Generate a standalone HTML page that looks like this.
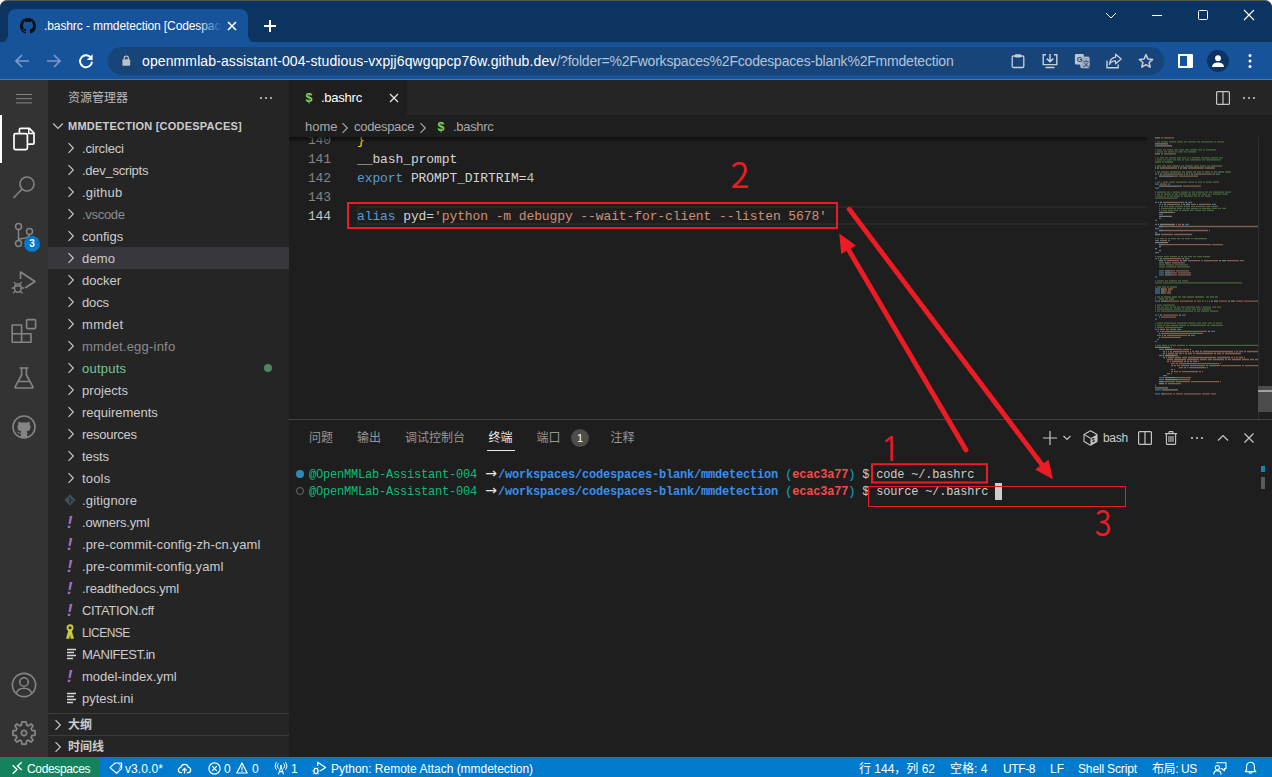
<!DOCTYPE html>
<html lang="zh-CN">
<head>
<meta charset="utf-8">
<title>.bashrc - mmdetection [Codespaces]</title>
<style>
*{box-sizing:border-box;margin:0;padding:0}
html,body{width:1272px;height:777px;overflow:hidden;background:#fff}
body{position:relative;font-family:"Liberation Sans","Noto Sans CJK SC",sans-serif;font-size:13px;color:#ccc;-webkit-font-smoothing:antialiased}
.abs{position:absolute}
svg{display:block;overflow:visible}
/* ---------- chrome ---------- */
#chrome{position:absolute;left:0;top:0;width:1272px;height:80px;background:#0c3460;border-radius:7px 7px 0 0;border-top:1px solid #5a534b;overflow:hidden}
#ctab{position:absolute;left:8px;top:8px;width:240px;height:34px;background:#16539b;border-radius:8px 8px 0 0}
#ctab .ttl{position:absolute;left:36px;top:10px;width:178px;white-space:nowrap;overflow:hidden;font-size:12px;color:#fff;letter-spacing:-0.1px}
#ctoolbar{position:absolute;left:0;top:41px;width:1272px;height:38px;background:#16539b;border-bottom:1px solid #4878b4}
#omni{position:absolute;left:108px;top:5px;width:1056px;height:28px;border-radius:14px;background:#174479}
#omni .url{position:absolute;left:34px;top:6px;font-size:14px;color:#fff;white-space:nowrap;letter-spacing:0.11px}
#omni .url span{color:#b3c5dc;letter-spacing:-0.2px}
/* ---------- vscode ---------- */
#act{position:absolute;left:0;top:80px;width:48px;height:677px;background:#333333}
#side{position:absolute;left:48px;top:80px;width:241px;height:677px;background:#252526}
#edit{position:absolute;left:289px;top:80px;width:983px;height:339px;background:#1e1e1e}
#panel{position:absolute;left:289px;top:419px;width:983px;height:338px;background:#1e1e1e;border-top:1px solid #424242}
#status{position:absolute;left:0;top:757px;width:1272px;height:22px;background:#007acc;color:#fff;font-size:12px}
#tree{position:absolute;left:0;top:0;width:241px;height:633px;overflow:hidden}
.row{position:absolute;left:0;width:241px;height:22px;line-height:22px;white-space:nowrap;color:#cccccc}
.row.sel{background:#37373d}
.row.dim{color:#8c8c8c}
.row.grn{color:#73c991}
.row .ic{position:absolute;left:18px;top:5px}
.row .yml{top:0;left:19px;color:#a074c4;font-weight:bold;font-style:italic;font-size:16.5px}
.row .lb{position:absolute;left:34px;top:1px;font-size:13px}
.row .dot{position:absolute;left:216px;top:7px;width:8px;height:8px;border-radius:4px;background:#4f8462}
.pane{position:absolute;left:0;width:241px;height:22px;border-top:1px solid #3c3c3c;line-height:21px}
.pane span{position:absolute;left:20px;top:1px;font-size:12px;font-weight:bold;color:#cccccc}
#code{position:absolute;left:0;top:57px;width:983px;height:282px;overflow:hidden;font-family:"Liberation Mono","DejaVu Sans Mono",monospace;font-size:13px;letter-spacing:-0.1px;color:#d4d4d4}
.ln{position:absolute;left:0;width:983px;height:19px;line-height:19px;white-space:pre}
.ln .no{position:absolute;left:0;top:1px;width:42px;text-align:right;color:#858585}
.ln .no.cur{color:#c6c6c6}
.ln .tx{position:absolute;left:68px;top:1px}
.ln b{font-weight:normal}
.ln .k{color:#569cd6}.ln .s{color:#ce9178}.ln .n{color:#b5cea8}
#ptabs{position:absolute;left:0;top:0;width:700px;height:35px}
.ptab{position:absolute;top:9px;font-size:12px;line-height:18px;color:#969696;white-space:nowrap}
.ptab.on{color:#e7e7e7}
#term{position:absolute;left:0;top:0;width:983px;height:337px;font-family:"Liberation Mono","DejaVu Sans Mono",monospace;font-size:12px;letter-spacing:-0.2px;color:#cccccc}
.tl{position:absolute;left:20px;height:17px;line-height:17px;white-space:pre}
.tl b{font-weight:normal}
.tl .g{color:#0dbc79}.tl .bl{color:#3b8eea;font-weight:bold}.tl .cy{color:#11a8cd}.tl .rd{color:#f14c4c;font-weight:bold}
.tl .ar{display:inline-block;width:14px;color:#e5e5e5;font-family:"DejaVu Sans","Liberation Sans",sans-serif;letter-spacing:0;font-size:14px;line-height:14px;text-align:center}
.st{position:absolute;top:3px;font-size:12px;line-height:18px;white-space:nowrap;color:#fff}
</style>
</head>
<body>
<div id="chrome">
  <div id="ctab">
    <svg class="abs" style="left:-8px;bottom:0" width="8" height="8"><path d="M0 8 A8 8 0 0 0 8 0 V8 Z" fill="#16539b"/></svg>
    <svg class="abs" style="right:-8px;bottom:0" width="8" height="8"><path d="M8 8 A8 8 0 0 1 0 0 V8 Z" fill="#16539b"/></svg>
    <svg class="abs" style="left:12px;top:9px" width="16" height="16" viewBox="0 0 16 16"><path fill="#0b0f14" d="M8 0C3.58 0 0 3.58 0 8c0 3.54 2.29 6.53 5.47 7.59.4.07.55-.17.55-.38 0-.19-.01-.82-.01-1.49-2.01.37-2.53-.49-2.69-.94-.09-.23-.48-.94-.82-1.13-.28-.15-.68-.52-.01-.53.63-.01 1.08.58 1.23.82.72 1.21 1.87.87 2.33.66.07-.52.28-.87.51-1.07-1.78-.2-3.64-.89-3.64-3.95 0-.87.31-1.59.82-2.15-.08-.2-.36-1.02.08-2.12 0 0 .67-.21 2.2.82.64-.18 1.32-.27 2-.27s1.36.09 2 .27c1.53-1.04 2.2-.82 2.2-.82.44 1.1.16 1.92.08 2.12.51.56.82 1.27.82 2.15 0 3.07-1.87 3.75-3.65 3.95.29.25.54.73.54 1.48 0 1.07-.01 1.93-.01 2.2 0 .21.15.46.55.38A8.01 8.01 0 0 0 16 8c0-4.42-3.58-8-8-8z"/></svg>
    <div class="ttl">.bashrc - mmdetection [Codespaces]</div>
    <div class="abs" style="left:190px;top:8px;width:24px;height:22px;background:linear-gradient(90deg,rgba(22,83,155,0),#16539b)"></div>
    <svg class="abs" style="left:219px;top:12px" width="10" height="10" viewBox="0 0 10 10"><path d="M1 1 L9 9 M9 1 L1 9" stroke="#fff" stroke-width="1.6" fill="none"/></svg>
  </div>
  <svg class="abs" style="left:263px;top:18px" width="14" height="14" viewBox="0 0 14 14"><path d="M7 1 V13 M1 7 H13" stroke="#fff" stroke-width="2" fill="none"/></svg>
  <!-- window controls -->
  <svg class="abs" style="left:1104px;top:10px" width="14" height="10" viewBox="0 0 14 10"><path d="M2 2 L7 7 L12 2" stroke="#fff" stroke-width="1" fill="none"/></svg>
  <div class="abs" style="left:1152px;top:14px;width:10px;height:1px;background:#fff"></div>
  <div class="abs" style="left:1198px;top:9px;width:10px;height:10px;border:1px solid #fff;border-radius:1.5px"></div>
  <svg class="abs" style="left:1243px;top:8px" width="12" height="12" viewBox="0 0 12 12"><path d="M1 1 L11 11 M11 1 L1 11" stroke="#fff" stroke-width="1.1" fill="none"/></svg>
  <div id="ctoolbar">
    <svg class="abs" style="left:14px;top:11px" width="16" height="16" viewBox="0 0 16 16"><path d="M15 8 H2.5 M8 2 L2 8 L8 14" stroke="#7b9bc6" stroke-width="1.7" fill="none"/></svg>
    <svg class="abs" style="left:46px;top:11px" width="16" height="16" viewBox="0 0 16 16"><path d="M1 8 H13.5 M8 2 L14 8 L8 14" stroke="#7b9bc6" stroke-width="1.7" fill="none"/></svg>
    <svg class="abs" style="left:78px;top:11px" width="16" height="16" viewBox="0 0 16 16"><path d="M13.2 5.2 A6 6 0 1 0 14 8.6" stroke="#fff" stroke-width="1.9" fill="none"/><path d="M14.6 1.2 V7 H8.8 Z" fill="#fff"/></svg>
    <div id="omni">
      <svg class="abs" style="left:14px;top:8px" width="8.6" height="11.2" viewBox="0 0 10 13"><rect x="0.5" y="5" width="9" height="7.5" rx="1" fill="#bcc1c8"/><path d="M2.6 5.5 V3.6 A2.4 2.4 0 0 1 7.4 3.6 V5.5" stroke="#bcc1c8" stroke-width="1.5" fill="none"/></svg>
      <div class="url">openmmlab-assistant-004-studious-vxpjj6qwgqpcp76w.github.dev<span>/?folder=%2Fworkspaces%2Fcodespaces-blank%2Fmmdetection</span></div>
      <!-- clipboard -->
      <svg class="abs" style="left:902px;top:6px" width="16" height="16" viewBox="0 0 16 16"><rect x="2.2" y="3" width="11.6" height="11.5" rx="1.2" stroke="#c9d0da" stroke-width="1.3" fill="none"/><rect x="5" y="1.2" width="6" height="3.4" rx="0.8" fill="#c9d0da"/></svg>
      <!-- install -->
      <svg class="abs" style="left:933px;top:6px" width="18" height="16" viewBox="0 0 18 16"><path d="M5 1.8 H2.2 V11.6 H15.8 V1.8 H13" stroke="#c9d0da" stroke-width="1.4" fill="none"/><path d="M9 1 V8.4 M5.8 5.6 L9 8.8 L12.2 5.6" stroke="#c9d0da" stroke-width="1.5" fill="none"/><path d="M4.5 14.4 H13.5" stroke="#c9d0da" stroke-width="1.5"/></svg>
      <!-- translate -->
      <svg class="abs" style="left:966px;top:6px" width="16" height="16" viewBox="0 0 18 18"><rect x="1" y="1" width="10" height="12" rx="1.2" fill="#bcc4cf"/><rect x="7.6" y="4.6" width="9.4" height="12" rx="1.2" fill="#9fabba" stroke="#bcc4cf" stroke-width="1"/><text x="3" y="10.5" font-size="8" font-weight="bold" fill="#174479" font-family="Liberation Sans, sans-serif">G</text><text x="9.6" y="14.6" font-size="8" fill="#174479" font-family="Noto Sans CJK SC, sans-serif">文</text></svg>
      <!-- share -->
      <svg class="abs" style="left:997px;top:5px" width="18" height="18" viewBox="0 0 18 18"><path d="M2 8.5 V15.8 H13.2 V12.6" stroke="#c9d0da" stroke-width="1.4" fill="none"/><path d="M10.6 2.2 L16.2 7 L10.6 11.8 V8.9 C7.4 8.9 5.6 10 4.4 12.4 C4.8 8.6 6.8 5.6 10.6 5.1 Z" stroke="#c9d0da" stroke-width="1.3" fill="none" stroke-linejoin="round"/></svg>
      <!-- star -->
      <svg class="abs" style="left:1030px;top:6px" width="16" height="16" viewBox="0 0 16 16"><path d="M8 1.6 L9.9 6 L14.7 6.4 L11.1 9.5 L12.2 14.2 L8 11.7 L3.8 14.2 L4.9 9.5 L1.3 6.4 L6.1 6 Z" stroke="#c9d0da" stroke-width="1.5" fill="none" stroke-linejoin="round"/></svg>
    </div>
    <!-- side panel -->
    <div class="abs" style="left:1178px;top:12px;width:15px;height:14px;border:2px solid #fff;border-right-width:6px;border-radius:1px"></div>
    <div class="abs" style="left:1207px;top:8px;width:22px;height:22px;border-radius:11px;background:#0c3361"></div>
    <svg class="abs" style="left:1211px;top:12px" width="14" height="14" viewBox="0 0 14 14"><circle cx="7" cy="4.2" r="2.9" fill="#fff"/><path d="M1 13 C1 9.6 4 8.4 7 8.4 C10 8.4 13 9.6 13 13 Z" fill="#fff"/></svg>
    <svg class="abs" style="left:1248px;top:11px" width="4" height="16" viewBox="0 0 4 16"><circle cx="2" cy="2.4" r="1.5" fill="#fff"/><circle cx="2" cy="8" r="1.5" fill="#fff"/><circle cx="2" cy="13.6" r="1.5" fill="#fff"/></svg>
  </div>
</div>
<div id="act">
  <svg class="abs" style="left:16px;top:14px" width="16" height="10" viewBox="0 0 16 10"><path d="M0 0.5 H16 M0 4.7 H16 M0 8.9 H16" stroke="#858585" stroke-width="1"/></svg>
  <div class="abs" style="left:0;top:35px;width:2px;height:48px;background:#fff"></div>
  <!-- files -->
  <svg class="abs" style="left:12px;top:47px" width="24" height="24" viewBox="0 0 24 24"><path d="M7.4 6.2 V2.6 A1.2 1.2 0 0 1 8.6 1.4 H17.4 L22 6 V16 A1.2 1.2 0 0 1 20.8 17.2 H16" stroke="#fff" stroke-width="1.7" fill="none"/><path d="M16.8 1.6 V6.6 H21.8" stroke="#fff" stroke-width="1.5" fill="none"/><rect x="2" y="6.6" width="13.4" height="16" rx="1.6" stroke="#fff" stroke-width="1.7" fill="none"/></svg>
  <!-- search -->
  <svg class="abs" style="left:12px;top:95px" width="24" height="24" viewBox="0 0 24 24"><circle cx="15" cy="9" r="7" stroke="#858585" stroke-width="1.6" fill="none"/><path d="M10 14 L1.5 23" stroke="#858585" stroke-width="1.6"/></svg>
  <!-- scm -->
  <svg class="abs" style="left:12px;top:142px" width="24" height="26" viewBox="0 0 24 26"><circle cx="6.5" cy="4.5" r="3" stroke="#858585" stroke-width="1.5" fill="none"/><circle cx="6.5" cy="21.5" r="3" stroke="#858585" stroke-width="1.5" fill="none"/><circle cx="17.5" cy="9.5" r="3" stroke="#858585" stroke-width="1.5" fill="none"/><path d="M6.5 7.5 V18.5 M17.5 12.5 C17.5 16.5 12 16 7 17.2" stroke="#858585" stroke-width="1.5" fill="none"/></svg>
  <div class="abs" style="left:24px;top:156px;width:16px;height:16px;border-radius:8px;background:#007acc;color:#fff;font-size:10px;font-weight:bold;text-align:center;line-height:16px">3</div>
  <!-- debug -->
  <svg class="abs" style="left:11px;top:190px" width="26" height="26" viewBox="0 0 26 26"><path d="M9.5 9 V2 L24 11.5 L14 18" stroke="#858585" stroke-width="1.6" fill="none" stroke-linejoin="round"/><ellipse cx="6.8" cy="18" rx="3.3" ry="4.3" stroke="#858585" stroke-width="1.5" fill="none"/><path d="M4.5 13.8 L3 12 M9.1 13.8 L10.6 12 M3.5 18 H0.6 M10.1 18 H13 M4.2 21.2 L2 23.4 M9.4 21.2 L11.6 23.4 M4 16 H9.6" stroke="#858585" stroke-width="1.3" fill="none"/></svg>
  <!-- extensions -->
  <svg class="abs" style="left:11px;top:237px" width="26" height="26" viewBox="0 0 26 26"><path d="M1.2 8 H10.6 V16.8 H20 V25.2 H1.2 Z M1.2 16.8 H10.6 V25.2" stroke="#858585" stroke-width="1.6" fill="none" stroke-linejoin="round"/><rect x="15.6" y="2.6" width="9" height="9" rx="1" stroke="#858585" stroke-width="1.6" fill="none"/></svg>
  <!-- beaker -->
  <svg class="abs" style="left:12px;top:286px" width="24" height="24" viewBox="0 0 24 24"><path d="M7.5 2 H16.5 M9.6 2 V9 L3.2 20.6 A0.9 0.9 0 0 0 4 22 H20 A0.9 0.9 0 0 0 20.8 20.6 L14.4 9 V2 M6.4 15.5 H17.6" stroke="#858585" stroke-width="1.6" fill="none" stroke-linejoin="round"/></svg>
  <!-- github -->
  <svg class="abs" style="left:12px;top:335px" width="24" height="24" viewBox="0 0 24 24"><circle cx="12" cy="12" r="11" stroke="#858585" stroke-width="1.6" fill="none"/><path fill="#858585" d="M8.8 22 V18.6 C6 19.3 5.6 17.2 4.6 16.6 C6 16.3 6.6 17.6 7.4 17.8 C8.1 18 8.6 17.8 8.9 17.5 C9 17 9.2 16.6 9.6 16.3 C7 16 5.4 14.8 5.4 11.9 C5.4 10.9 5.8 10 6.4 9.3 C6.2 8.6 6.2 7.6 6.6 6.8 C7.6 6.8 8.5 7.3 9.1 7.8 C10.9 7.3 13.1 7.3 14.9 7.8 C15.5 7.3 16.4 6.8 17.4 6.8 C17.8 7.6 17.8 8.6 17.6 9.3 C18.2 10 18.6 10.9 18.6 11.9 C18.6 14.8 17 16 14.4 16.3 C15 16.8 15.2 17.5 15.2 18.4 V22 Z"/></svg>
  <!-- account -->
  <svg class="abs" style="left:11px;top:592px" width="26" height="26" viewBox="0 0 26 26"><circle cx="13" cy="13" r="11.6" stroke="#858585" stroke-width="1.6" fill="none"/><circle cx="13" cy="10" r="4.3" stroke="#858585" stroke-width="1.6" fill="none"/><path d="M5.4 21.6 C6.2 17.6 9.4 16.2 13 16.2 C16.6 16.2 19.8 17.6 20.6 21.6" stroke="#858585" stroke-width="1.6" fill="none"/></svg>
  <!-- gear -->
  <svg class="abs" style="left:11px;top:640px" width="26" height="26" viewBox="-13 -13 26 26"><g stroke="#858585" stroke-width="1.9" fill="none" stroke-linejoin="round" transform="scale(0.94)"><path d="M-2.2 -11.8 H2.2 L2.9 -8.3 L4.6 -7.6 L7.6 -9.6 L9.6 -7.6 L7.6 -4.6 L8.3 -2.9 L11.8 -2.2 V2.2 L8.3 2.9 L7.6 4.6 L9.6 7.6 L7.6 9.6 L4.6 7.6 L2.9 8.3 L2.2 11.8 H-2.2 L-2.9 8.3 L-4.6 7.6 L-7.6 9.6 L-9.6 7.6 L-7.6 4.6 L-8.3 2.9 L-11.8 2.2 V-2.2 L-8.3 -2.9 L-7.6 -4.6 L-9.6 -7.6 L-7.6 -9.6 L-4.6 -7.6 L-2.9 -8.3 Z"/><circle cx="0" cy="0" r="2.8"/></g></svg>
</div>
<div id="side">
  <div class="abs" style="left:20px;top:10px;font-size:12px;color:#bbbbbb;line-height:17px">资源管理器</div>
  <svg class="abs" style="left:211px;top:16px" width="14" height="4" viewBox="0 0 14 4"><circle cx="2" cy="2" r="1.1" fill="#c5c5c5"/><circle cx="7" cy="2" r="1.1" fill="#c5c5c5"/><circle cx="12" cy="2" r="1.1" fill="#c5c5c5"/></svg>
  <svg class="abs" style="left:4px;top:41px" width="12" height="10" viewBox="0 0 12 10"><path d="M1.2 2.5 L6 7.3 L10.8 2.5" stroke="#c5c5c5" stroke-width="1.2" fill="none"/></svg>
  <div class="abs" style="left:20px;top:40px;font-size:11px;font-weight:bold;color:#cccccc;letter-spacing:0.23px;white-space:nowrap">MMDETECTION [CODESPACES]</div>
  <div id="tree">
<div class="row " style="top:57px"><svg class="ic" width="10" height="12" viewBox="0 0 10 12"><path d="M2.5 1.2 L7.3 6 L2.5 10.8" stroke="#c5c5c5" stroke-width="1.2" fill="none"/></svg><span class="lb" style="letter-spacing:-0.18px">.circleci</span></div>
<div class="row " style="top:79px"><svg class="ic" width="10" height="12" viewBox="0 0 10 12"><path d="M2.5 1.2 L7.3 6 L2.5 10.8" stroke="#c5c5c5" stroke-width="1.2" fill="none"/></svg><span class="lb" style="letter-spacing:-0.27px">.dev_scripts</span></div>
<div class="row " style="top:101px"><svg class="ic" width="10" height="12" viewBox="0 0 10 12"><path d="M2.5 1.2 L7.3 6 L2.5 10.8" stroke="#c5c5c5" stroke-width="1.2" fill="none"/></svg><span class="lb" style="letter-spacing:0.19px">.github</span></div>
<div class="row dim" style="top:123px"><svg class="ic" width="10" height="12" viewBox="0 0 10 12"><path d="M2.5 1.2 L7.3 6 L2.5 10.8" stroke="#c5c5c5" stroke-width="1.2" fill="none"/></svg><span class="lb" style="letter-spacing:-0.30px">.vscode</span></div>
<div class="row " style="top:145px"><svg class="ic" width="10" height="12" viewBox="0 0 10 12"><path d="M2.5 1.2 L7.3 6 L2.5 10.8" stroke="#c5c5c5" stroke-width="1.2" fill="none"/></svg><span class="lb">configs</span></div>
<div class="row sel" style="top:167px"><svg class="ic" width="10" height="12" viewBox="0 0 10 12"><path d="M2.5 1.2 L7.3 6 L2.5 10.8" stroke="#c5c5c5" stroke-width="1.2" fill="none"/></svg><span class="lb" style="letter-spacing:0.17px">demo</span></div>
<div class="row " style="top:189px"><svg class="ic" width="10" height="12" viewBox="0 0 10 12"><path d="M2.5 1.2 L7.3 6 L2.5 10.8" stroke="#c5c5c5" stroke-width="1.2" fill="none"/></svg><span class="lb">docker</span></div>
<div class="row " style="top:211px"><svg class="ic" width="10" height="12" viewBox="0 0 10 12"><path d="M2.5 1.2 L7.3 6 L2.5 10.8" stroke="#c5c5c5" stroke-width="1.2" fill="none"/></svg><span class="lb" style="letter-spacing:-0.12px">docs</span></div>
<div class="row " style="top:233px"><svg class="ic" width="10" height="12" viewBox="0 0 10 12"><path d="M2.5 1.2 L7.3 6 L2.5 10.8" stroke="#c5c5c5" stroke-width="1.2" fill="none"/></svg><span class="lb" style="letter-spacing:0.33px">mmdet</span></div>
<div class="row dim" style="top:255px"><svg class="ic" width="10" height="12" viewBox="0 0 10 12"><path d="M2.5 1.2 L7.3 6 L2.5 10.8" stroke="#c5c5c5" stroke-width="1.2" fill="none"/></svg><span class="lb" style="letter-spacing:0.22px">mmdet.egg-info</span></div>
<div class="row grn" style="top:277px"><svg class="ic" width="10" height="12" viewBox="0 0 10 12"><path d="M2.5 1.2 L7.3 6 L2.5 10.8" stroke="#c5c5c5" stroke-width="1.2" fill="none"/></svg><span class="lb" style="letter-spacing:0.22px">outputs</span><i class="dot"></i></div>
<div class="row " style="top:299px"><svg class="ic" width="10" height="12" viewBox="0 0 10 12"><path d="M2.5 1.2 L7.3 6 L2.5 10.8" stroke="#c5c5c5" stroke-width="1.2" fill="none"/></svg><span class="lb" style="letter-spacing:0.06px">projects</span></div>
<div class="row " style="top:321px"><svg class="ic" width="10" height="12" viewBox="0 0 10 12"><path d="M2.5 1.2 L7.3 6 L2.5 10.8" stroke="#c5c5c5" stroke-width="1.2" fill="none"/></svg><span class="lb">requirements</span></div>
<div class="row " style="top:343px"><svg class="ic" width="10" height="12" viewBox="0 0 10 12"><path d="M2.5 1.2 L7.3 6 L2.5 10.8" stroke="#c5c5c5" stroke-width="1.2" fill="none"/></svg><span class="lb" style="letter-spacing:-0.25px">resources</span></div>
<div class="row " style="top:365px"><svg class="ic" width="10" height="12" viewBox="0 0 10 12"><path d="M2.5 1.2 L7.3 6 L2.5 10.8" stroke="#c5c5c5" stroke-width="1.2" fill="none"/></svg><span class="lb" style="letter-spacing:-0.09px">tests</span></div>
<div class="row " style="top:387px"><svg class="ic" width="10" height="12" viewBox="0 0 10 12"><path d="M2.5 1.2 L7.3 6 L2.5 10.8" stroke="#c5c5c5" stroke-width="1.2" fill="none"/></svg><span class="lb" style="letter-spacing:0.17px">tools</span></div>
<div class="row " style="top:409px"><svg class="ic" style="left:15.6px" width="12" height="12" viewBox="0 0 12 12"><path d="M6 0.4 L11.6 6 L6 11.6 L0.4 6 Z" fill="#41535b"/><path d="M4.2 2.6 L6.8 5.2 M6 4.4 V8.4 M6.6 5 L8.2 6.6" stroke="#252526" stroke-width="0.9"/><circle cx="6" cy="8.4" r="0.9" fill="#252526"/><circle cx="8.2" cy="6.6" r="0.9" fill="#252526"/></svg><span class="lb" style="letter-spacing:0.16px">.gitignore</span></div>
<div class="row " style="top:431px"><span class="ic yml">!</span><span class="lb" style="letter-spacing:-0.18px">.owners.yml</span></div>
<div class="row " style="top:453px"><span class="ic yml">!</span><span class="lb" style="letter-spacing:0.13px">.pre-commit-config-zh-cn.yaml</span></div>
<div class="row " style="top:475px"><span class="ic yml">!</span><span class="lb" style="letter-spacing:0.12px">.pre-commit-config.yaml</span></div>
<div class="row " style="top:497px"><span class="ic yml">!</span><span class="lb" style="letter-spacing:-0.12px">.readthedocs.yml</span></div>
<div class="row " style="top:519px"><span class="ic yml">!</span><span class="lb" style="letter-spacing:-0.34px">CITATION.cff</span></div>
<div class="row " style="top:541px"><svg class="ic" width="12" height="16" viewBox="0 0 12 16" style="top:3px;left:17px"><circle cx="5" cy="3.8" r="2.5" stroke="#cbcb41" stroke-width="1.9" fill="none"/><path d="M3.6 5.6 L1 14.8 H4.3 L5 10.4 L5.7 14.8 H9 L6.4 5.6 Z" fill="#cbcb41"/></svg><span class="lb" style="font-size:12px;letter-spacing:-0.5px;top:1px">LICENSE</span></div>
<div class="row " style="top:563px"><svg class="ic" width="10" height="12" viewBox="0 0 10 12" style="left:19px"><path d="M0 1.5 H9 M0 4.5 H7 M0 7.5 H9 M0 10.5 H6" stroke="#d4d7d6" stroke-width="1.5"/></svg><span class="lb" style="letter-spacing:-0.47px">MANIFEST.in</span></div>
<div class="row " style="top:585px"><span class="ic yml">!</span><span class="lb">model-index.yml</span></div>
<div class="row " style="top:607px"><svg class="ic" width="10" height="12" viewBox="0 0 10 12" style="left:19px"><path d="M0 1.5 H9 M0 4.5 H7 M0 7.5 H9 M0 10.5 H6" stroke="#d4d7d6" stroke-width="1.5"/></svg><span class="lb">pytest.ini</span></div>
  </div>
  <div class="pane" style="top:633px"><svg class="abs" style="left:5px;top:5px" width="10" height="12" viewBox="0 0 10 12"><path d="M2.5 1.2 L7.3 6 L2.5 10.8" stroke="#c5c5c5" stroke-width="1.2" fill="none"/></svg><span>大纲</span></div>
  <div class="pane" style="top:655px"><svg class="abs" style="left:5px;top:5px" width="10" height="12" viewBox="0 0 10 12"><path d="M2.5 1.2 L7.3 6 L2.5 10.8" stroke="#c5c5c5" stroke-width="1.2" fill="none"/></svg><span>时间线</span></div>
</div>
<div id="edit">
  <div class="abs" style="left:0;top:0;width:983px;height:35px;background:#252526"></div>
  <div class="abs" style="left:0;top:0;width:118px;height:35px;background:#1e1e1e">
    <span class="abs" style="left:16.5px;top:8.5px;font-size:12.5px;font-weight:bold;color:#89d051;line-height:18px">$</span>
    <span class="abs" style="left:32px;top:9px;font-size:13px;color:#fff;line-height:18px;letter-spacing:-0.25px">.bashrc</span>
    <svg class="abs" style="left:100px;top:13px" width="10" height="10" viewBox="0 0 10 10"><path d="M1 1 L9 9 M9 1 L1 9" stroke="#e8e8e8" stroke-width="1.2" fill="none"/></svg>
  </div>
  <!-- editor actions -->
  <svg class="abs" style="left:927px;top:11px" width="14" height="14" viewBox="0 0 14 14"><rect x="0.6" y="0.6" width="12.8" height="12.8" rx="1" stroke="#c5c5c5" stroke-width="1.2" fill="none"/><path d="M7 0.6 V13.4" stroke="#c5c5c5" stroke-width="1.2"/></svg>
  <svg class="abs" style="left:953px;top:16px" width="14" height="4" viewBox="0 0 14 4"><circle cx="2" cy="2" r="1.1" fill="#c5c5c5"/><circle cx="7" cy="2" r="1.1" fill="#c5c5c5"/><circle cx="12" cy="2" r="1.1" fill="#c5c5c5"/></svg>
  <!-- breadcrumbs -->
  <div class="abs bc" style="left:16px;top:36px;height:22px;line-height:22px;white-space:nowrap;font-size:13px;color:#a9a9a9">
    <span class="abs" style="left:0">home</span>
    <svg class="abs" style="left:35px;top:6px" width="10" height="12" viewBox="0 0 10 12"><path d="M2.5 1.2 L7.3 6 L2.5 10.8" stroke="#a9a9a9" stroke-width="1.1" fill="none"/></svg>
    <span class="abs" style="left:49px;letter-spacing:-0.3px">codespace</span>
    <svg class="abs" style="left:113px;top:6px" width="10" height="12" viewBox="0 0 10 12"><path d="M2.5 1.2 L7.3 6 L2.5 10.8" stroke="#a9a9a9" stroke-width="1.1" fill="none"/></svg>
    <span class="abs" style="left:132.5px;font-weight:bold;color:#89d051;font-size:12.5px">$</span>
    <span class="abs" style="left:148px;letter-spacing:-0.3px">.bashrc</span>
  </div>
  <!-- code area -->
  <div id="code">
    <div class="ln" style="top:-7px"><span class="no">140</span><span class="tx"><b style="color:#ffd700;font-weight:normal">}</b></span></div>
    <div class="ln" style="top:12px"><span class="no">141</span><span class="tx">__bash_prompt</span></div>
    <div class="ln" style="top:31px"><span class="no">142</span><span class="tx"><b class="k">export</b> PROMPT_DIRTRIM=<b class="n">4</b></span></div>
    <div class="ln" style="top:50px"><span class="no">143</span><span class="tx"></span></div>
    <div class="abs" style="left:68px;top:69px;width:790px;height:19px;border:2px solid #282828;border-right:none"></div>
    <div class="ln" style="top:69px"><span class="no cur">144</span><span class="tx"><b class="k">alias</b> pyd=<b class="s">'python -m debugpy --wait-for-client --listen 5678'</b></span></div>
    <div class="abs" style="left:0;top:0;width:858px;height:6px;background:linear-gradient(#000 0,rgba(0,0,0,0) 100%);opacity:.55"></div>
  </div>
  <svg class="abs" style="left:866px;top:57px" width="103" height="282" viewBox="0 0 103 282"><path d="M0 4.8h1M2 4.8h3M6 4.8h7M14 4.8h7M22 4.8h6M29 4.8h3M33 4.8h8M42 4.8h3M46 4.8h12M59 4.8h2M62 4.8h7M0 12.9h1M2 12.9h5M8 12.9h3M12 12.9h6M19 12.9h4M24 12.9h5M30 12.9h4M35 12.9h7M43 12.9h4M48 12.9h2M51 12.9h10M0 14.9h1M2 14.9h6M9 14.9h3M13 14.9h6M20 14.9h2M23 14.9h5M29 14.9h3M33 14.9h8M0 20.9h1M2 20.9h2M5 20.9h4M10 20.9h3M14 20.9h7M22 20.9h4M27 20.9h4M32 20.9h2M35 20.9h1M37 20.9h8M46 20.9h9M56 20.9h7M64 20.9h4M0 22.9h1M2 22.9h5M8 22.9h3M12 22.9h5M18 22.9h3M22 22.9h4M27 22.9h2M30 22.9h4M35 22.9h11M47 22.9h3M51 22.9h15M0 25.0h6M7 25.0h2M10 25.0h8M0 29.0h1M2 29.0h4M7 29.0h4M12 29.0h4M17 29.0h8M26 29.0h3M30 29.0h8M39 29.0h5M45 29.0h6M52 29.0h3M56 29.0h11M0 35.0h1M2 35.0h3M6 35.0h8M15 35.0h11M27 35.0h3M31 35.0h6M38 35.0h3M42 35.0h4M47 35.0h2M50 35.0h5M56 35.0h2M59 35.0h3M63 35.0h6M70 35.0h6M0 45.1h1M2 45.1h3M6 45.1h1M8 45.1h5M14 45.1h6M21 45.1h11M33 45.1h6M40 45.1h2M43 45.1h4M48 45.1h2M51 45.1h6M58 45.1h6M0 55.2h1M2 55.2h9M12 55.2h3M16 55.2h1M18 55.2h7M26 55.2h7M34 55.2h2M37 55.2h3M41 55.2h8M50 55.2h3M54 55.2h3M58 55.2h11M70 55.2h6M0 57.2h1M2 57.2h3M6 57.2h2M9 57.2h7M17 57.2h2M20 57.2h3M24 57.2h8M33 57.2h3M37 57.2h5M43 57.2h3M47 57.2h5M53 57.2h2M56 57.2h1M58 57.2h8M67 57.2h6M0 59.2h1M2 59.2h6M9 59.2h2M12 59.2h2M15 59.2h3M19 59.2h6M26 59.2h2M29 59.2h9M39 59.2h3M43 59.2h2M46 59.2h3M50 59.2h6M0 61.2h23M4 69.3h1M6 69.3h2M9 69.3h4M14 69.3h5M20 69.3h8M29 69.3h6M36 69.3h4M41 69.3h9M51 69.3h4M56 69.3h7M4 71.3h1M6 71.3h15M22 71.3h5M28 71.3h2M31 71.3h4M36 71.3h7M44 71.3h2M47 71.3h9M57 71.3h5M63 71.3h3M67 71.3h4M4 73.3h1M6 73.3h1M8 73.3h4M13 73.3h5M19 73.3h4M24 73.3h2M27 73.3h7M35 73.3h4M40 73.3h6M47 73.3h4M52 73.3h7M0 101.6h1M2 101.6h2M5 101.6h4M10 101.6h2M13 101.6h2M16 101.6h5M22 101.6h3M26 101.6h3M30 101.6h5M36 101.6h2M39 101.6h13M0 119.7h1M2 119.7h6M9 119.7h5M15 119.7h7M23 119.7h2M26 119.7h2M29 119.7h3M33 119.7h4M38 119.7h3M42 119.7h5M48 119.7h7M4 127.8h6M11 127.8h8M20 127.8h13M4 129.8h6M11 129.8h10M22 129.8h13M0 143.9h1M2 143.9h7M10 143.9h3M14 143.9h8M23 143.9h3M27 143.9h6M0 145.9h7M8 145.9h79M0 150.0h1M2 150.0h4M7 150.0h4M12 150.0h2M15 150.0h7M0 160.0h1M2 160.0h3M6 160.0h2M9 160.0h7M17 160.0h5M23 160.0h3M27 160.0h4M32 160.0h7M40 160.0h9M51 160.0h3M55 160.0h4M60 160.0h3M0 162.0h1M4 162.0h5M10 162.0h3M14 162.0h5M0 168.1h1M2 168.1h5M8 168.1h12M0 170.1h1M2 170.1h3M6 170.1h3M10 170.1h4M15 170.1h2M18 170.1h3M22 170.1h3M26 170.1h4M31 170.1h9M41 170.1h4M46 170.1h1M48 170.1h8M57 170.1h4M62 170.1h4M0 172.1h1M2 172.1h16M19 172.1h7M27 172.1h2M30 172.1h6M37 172.1h4M42 172.1h4M47 172.1h9M0 174.1h1M2 174.1h3M6 174.1h32M39 174.1h2M42 174.1h3M46 174.1h8M55 174.1h8M0 186.2h1M2 186.2h6M9 186.2h12M22 186.2h10M33 186.2h8M42 186.2h4M47 186.2h5M53 186.2h4M58 186.2h2M61 186.2h6M0 188.3h1M2 188.3h5M8 188.3h2M11 188.3h4M16 188.3h7M24 188.3h7M32 188.3h2M35 188.3h16M52 188.3h3M56 188.3h12M0 190.3h1M2 190.3h7M10 190.3h18M0 208.4h1M2 208.4h4M7 208.4h5M13 208.4h1M15 208.4h6M22 208.4h8M31 208.4h2M34 208.4h69" stroke="#6a9955" stroke-width="1.3" stroke-opacity="0.55" fill="none"/><path d="M6 0.8h2M9 0.8h10M6 16.9h2M9 16.9h12M5 31.0h17M33 31.0h16M50 31.0h10M8 37.1h20M39 37.1h18M18 39.1h5M24 39.1h19M5 47.1h7M28 49.2h18M8 65.3h21M12 67.3h13M36 67.3h5M42 67.3h1M44 67.3h12M17 75.4h3M21 87.5h1M23 87.5h3M8 89.5h95M8 93.5h45M54 93.5h1M6 97.5h12M19 97.5h18M5 103.6h7M8 107.6h48M57 107.6h11M8 121.7h18M9 123.7h2M12 123.7h12M33 123.7h12M46 123.7h2M49 123.7h14M72 123.7h12M85 123.7h4M13 125.8h3M17 125.8h13M15 133.8h5M21 133.8h13M16 135.8h6M23 135.8h13M16 137.9h6M23 137.9h13M9 152.0h3M13 152.0h5M9 154.0h3M13 154.0h3M8 156.0h3M12 156.0h4M12 164.1h12M25 164.1h13M39 164.1h2M42 164.1h4M47 164.1h2M50 164.1h1M52 164.1h1M64 164.1h8M81 164.1h7M89 164.1h14M8 178.2h15M6 180.2h15M5 192.3h5M11 192.3h3M15 192.3h6M10 194.3h42M6 196.3h42M12 198.3h20M6 200.4h20M16 210.4h1M19 212.4h8M28 212.4h6M8 214.5h2M11 214.5h1M13 214.5h1M15 214.5h2M18 214.5h16M35 214.5h1M37 214.5h2M40 214.5h4M45 214.5h2M48 214.5h30M79 214.5h1M81 214.5h2M84 214.5h4M89 214.5h2M92 214.5h11M8 216.5h2M11 216.5h1M13 216.5h6M20 216.5h3M24 216.5h3M28 216.5h1M30 216.5h2M33 216.5h4M38 216.5h2M41 216.5h17M59 216.5h2M62 216.5h4M67 216.5h2M70 216.5h16M20 218.5h3M8 220.5h2M11 220.5h1M13 220.5h6M20 220.5h6M27 220.5h5M33 220.5h28M62 220.5h13M76 220.5h2M79 220.5h1M81 220.5h2M84 220.5h4M89 220.5h1M12 222.5h6M19 222.5h12M32 222.5h12M45 222.5h7M53 222.5h4M58 222.5h11M70 222.5h2M73 222.5h3M77 222.5h9M87 222.5h7M95 222.5h4M100 222.5h3M12 224.5h2M15 224.5h1M17 224.5h11M29 224.5h2M32 224.5h2M35 224.5h2M38 224.5h4M43 224.5h1M16 226.6h4M21 226.6h2M24 226.6h40M65 226.6h1M16 228.6h2M19 228.6h2M22 228.6h3M26 228.6h8M35 228.6h15M51 228.6h2M54 228.6h11M66 228.6h20M87 228.6h2M90 228.6h13M24 230.6h4M29 230.6h2M32 230.6h1M34 230.6h17M52 230.6h1M16 232.6h2M19 232.6h1M16 234.6h2M19 234.6h4M24 234.6h2M27 234.6h16M44 234.6h2M47 234.6h1M12 236.6h3M16 236.6h1M8 238.7h4M20 240.7h16M22 242.7h13M8 244.7h12M21 244.7h14M36 244.7h28M65 244.7h1M10 246.7h2M13 246.7h13M10 256.8h7M18 256.8h2M21 256.8h7M29 256.8h17M47 256.8h8M56 256.8h5" stroke="#ce9178" stroke-width="1.3" stroke-opacity="0.55" fill="none"/><path d="M0 37.1h2M61 37.1h4M0 41.1h2M0 47.1h4M13 47.1h2M0 51.2h4M0 65.3h2M33 65.3h4M4 67.3h2M57 67.3h4M4 77.4h4M4 81.4h2M0 83.4h2M0 87.5h2M30 87.5h4M0 91.5h4M0 95.5h2M0 103.6h4M13 103.6h2M0 115.7h4M0 121.7h2M30 121.7h4M4 125.8h5M4 133.8h5M4 135.8h5M4 137.9h5M0 139.9h2M0 152.0h5M0 154.0h5M0 156.0h5M0 164.1h5M0 178.2h2M27 178.2h4M0 182.2h2M0 192.3h2M22 192.3h4M2 194.3h2M56 194.3h4M2 198.3h4M36 198.3h4M2 202.4h2M0 204.4h2M4 212.4h5M4 218.5h5M4 240.7h5M4 242.7h5M0 252.8h6M0 256.8h5" stroke="#569cd6" stroke-width="1.3" stroke-opacity="0.60" fill="none"/><path d="M0 0.8h5M0 6.8h9M9 6.8h4M0 8.8h13M13 8.8h4M0 16.9h5M0 31.0h1M2 31.0h2M23 31.0h1M25 31.0h2M28 31.0h4M3 37.1h1M5 37.1h2M29 37.1h1M31 37.1h2M34 37.1h1M36 37.1h2M58 37.1h2M4 39.1h14M4 49.2h23M3 65.3h1M5 65.3h2M30 65.3h2M7 67.3h1M9 67.3h2M26 67.3h1M28 67.3h2M31 67.3h4M4 75.4h13M4 79.4h13M3 87.5h1M5 87.5h15M27 87.5h2M4 89.5h4M4 93.5h4M0 97.5h5M0 105.6h13M4 107.6h4M4 109.6h2M0 111.6h2M4 113.7h2M3 121.7h1M5 121.7h2M27 121.7h2M4 123.7h4M25 123.7h2M28 123.7h4M64 123.7h2M67 123.7h4M10 125.8h3M10 133.8h5M10 135.8h6M10 137.9h6M6 152.0h3M6 154.0h3M6 156.0h2M6 164.1h6M54 164.1h1M56 164.1h2M59 164.1h4M73 164.1h2M76 164.1h4M3 178.2h1M5 178.2h2M24 178.2h2M4 180.2h1M3 192.3h1M5 194.3h1M7 194.3h2M53 194.3h2M4 196.3h1M7 198.3h1M9 198.3h2M33 198.3h2M4 200.4h1M0 210.4h15M10 212.4h9M35 212.4h1M10 218.5h10M10 240.7h10M10 242.7h12M4 244.7h4M4 246.7h5M0 248.7h1M0 250.8h13M7 252.8h15M22 252.8h1M6 256.8h4" stroke="#d4d4d4" stroke-width="1.3" stroke-opacity="0.50" fill="none"/></svg>
  <!-- overview ruler / scrollbar -->
  <div class="abs" style="left:969px;top:57px;width:14px;height:282px;border-left:1px solid #303030"></div>
  <div class="abs" style="left:969px;top:306px;width:14px;height:26px;background:#4b4b4b"></div>
  <div class="abs" style="left:969px;top:310px;width:14px;height:2px;background:#a0a0a0"></div>
</div>
<div id="panel">
  <div id="ptabs"><span class="ptab" style="left:20.0px">问题</span><span class="ptab" style="left:68.0px">输出</span><span class="ptab" style="left:116.0px">调试控制台</span><span class="ptab on" style="left:199.5px">终端</span><span class="ptab" style="left:247.5px">端口</span><span class="ptab" style="left:321.5px">注释</span>
    <div class="abs" style="left:198px;top:30px;width:28px;height:1px;background:#e7e7e7"></div>
    <div class="abs" style="left:282px;top:9px;width:18px;height:18px;border-radius:9px;background:#4d4d4d;color:#fff;font-size:11px;line-height:18px;text-align:center">1</div>
  </div>
  <!-- panel actions -->
  <svg class="abs" style="left:754px;top:11px" width="14" height="14" viewBox="0 0 14 14"><path d="M7 0 V14 M0 7 H14" stroke="#c5c5c5" stroke-width="1.2"/></svg>
  <svg class="abs" style="left:774px;top:15px" width="8" height="6" viewBox="0 0 8 6"><path d="M0.5 1 L4 4.5 L7.5 1" stroke="#c5c5c5" stroke-width="1.1" fill="none"/></svg>
  <svg class="abs" style="left:794px;top:10px" width="15" height="16" viewBox="0 0 15 16"><path d="M7.5 0.8 L14 4.4 V11.6 L7.5 15.2 L1 11.6 V4.4 Z" stroke="#c5c5c5" stroke-width="1.1" fill="none" stroke-linejoin="round"/><path d="M7.5 15.2 V8.2 L14 4.4 V11.6 Z" fill="#c5c5c5"/><path d="M1 4.4 L7.5 8.2" stroke="#c5c5c5" stroke-width="1.1"/><text x="8.8" y="12.2" font-size="5.5" font-weight="bold" fill="#1e1e1e" font-family="Liberation Sans, sans-serif">$</text></svg>
  <span class="abs" style="left:814px;top:10px;font-size:12px;color:#cccccc;line-height:16px;letter-spacing:-0.3px">bash</span>
  <svg class="abs" style="left:849px;top:11px" width="14" height="14" viewBox="0 0 14 14"><rect x="0.6" y="0.6" width="12.8" height="12.8" rx="1" stroke="#c5c5c5" stroke-width="1.2" fill="none"/><path d="M7 0.6 V13.4" stroke="#c5c5c5" stroke-width="1.2"/></svg>
  <svg class="abs" style="left:876px;top:11px" width="12" height="14" viewBox="0 0 12 14"><path d="M0 2.6 H12 M4 2.4 V1.2 A0.6 0.6 0 0 1 4.6 0.6 H7.4 A0.6 0.6 0 0 1 8 1.2 V2.4 M1.4 2.8 V12.4 A1 1 0 0 0 2.4 13.4 H9.6 A1 1 0 0 0 10.6 12.4 V2.8 M4 5 V11 M6 5 V11 M8 5 V11" stroke="#c5c5c5" stroke-width="1.1" fill="none"/></svg>
  <svg class="abs" style="left:901px;top:16px" width="14" height="4" viewBox="0 0 14 4"><circle cx="2" cy="2" r="1.1" fill="#c5c5c5"/><circle cx="7" cy="2" r="1.1" fill="#c5c5c5"/><circle cx="12" cy="2" r="1.1" fill="#c5c5c5"/></svg>
  <svg class="abs" style="left:928px;top:14px" width="12" height="8" viewBox="0 0 12 8"><path d="M1 6.5 L6 1.5 L11 6.5" stroke="#c5c5c5" stroke-width="1.2" fill="none"/></svg>
  <svg class="abs" style="left:955px;top:13px" width="10" height="10" viewBox="0 0 10 10"><path d="M0.5 0.5 L9.5 9.5 M9.5 0.5 L0.5 9.5" stroke="#c5c5c5" stroke-width="1.2" fill="none"/></svg>
  <!-- terminal -->
  <div id="term">
    <div class="abs" style="left:7px;top:50px;width:8.4px;height:8.4px;border-radius:4.2px;background:#2b8cb8"></div>
    <div class="abs" style="left:7px;top:67px;width:8.4px;height:8.4px;border-radius:4.2px;border:1.8px solid #6b6b6b"></div>
    <div class="tl" style="top:46px"><b class="g">@OpenMMLab-Assistant-004</b> <b class="ar">→</b><b class="bl">/workspaces/codespaces-blank/mmdetection</b> <b class="cy">(</b><b class="rd">ecac3a77</b><b class="cy">)</b> $ code ~/.bashrc</div>
    <div class="tl" style="top:63px"><b class="g">@OpenMMLab-Assistant-004</b> <b class="ar">→</b><b class="bl">/workspaces/codespaces-blank/mmdetection</b> <b class="cy">(</b><b class="rd">ecac3a77</b><b class="cy">)</b> $ source ~/.bashrc </div>
    <div class="abs" style="left:706px;top:63px;width:7px;height:17px;background:#cccccc"></div>
  </div>
  <div class="abs" style="left:972px;top:46px;width:4px;height:6px;background:#1b81a8"></div>
  <div class="abs" style="left:972px;top:57px;width:4px;height:12px;background:#5a5a5a"></div>
</div>
<div id="status">
  <div class="abs" style="left:0;top:0;width:100px;height:22px;background:#16825d"></div>
  <svg class="abs" style="left:12px;top:5px" width="11" height="13" viewBox="0 0 11 13"><path d="M0.7 3.3 L5 7.5 L0.7 11.7 M9.8 0.3 L5.5 4.1 L9.8 8" stroke="#fff" stroke-width="1.3" fill="none"/></svg>
  <span class="st" style="left:27px;letter-spacing:-0.35px">Codespaces</span>
  <svg class="abs" style="left:109px;top:5px" width="14" height="12" viewBox="0 0 14 12"><path d="M6.2 1 H12.6 V6.6 L7.6 11.2 L1 5.6 Z" stroke="#fff" stroke-width="1.2" fill="none" stroke-linejoin="round"/><path d="M9 1.4 C11.6 2.2 12.4 4.6 10 7.4" stroke="#fff" stroke-width="1" fill="none"/></svg>
  <span class="st" style="left:125px;letter-spacing:0.1px">v3.0.0*</span>
  <svg class="abs" style="left:178px;top:6px" width="13" height="11" viewBox="0 0 13 11"><path d="M4.2 9.6 H3.2 A2.6 2.6 0 0 1 2.8 4.4 A3.8 3.8 0 0 1 10.2 4.2 A2.7 2.7 0 0 1 9.8 9.6 H8.8" stroke="#fff" stroke-width="1.2" fill="none"/><path d="M6.5 10.6 V5.6 M4.4 7.6 L6.5 5.4 L8.6 7.6" stroke="#fff" stroke-width="1.2" fill="none"/></svg>
  <svg class="abs" style="left:208px;top:5px" width="13" height="13" viewBox="0 0 13 13"><circle cx="6.5" cy="6.5" r="5.6" stroke="#fff" stroke-width="1.2" fill="none"/><path d="M4.2 4.2 L8.8 8.8 M8.8 4.2 L4.2 8.8" stroke="#fff" stroke-width="1.2"/></svg>
  <span class="st" style="left:224px">0</span>
  <svg class="abs" style="left:236px;top:5px" width="12" height="12" viewBox="0 0 12 12"><path d="M6 1 L11.2 11 H0.8 Z" stroke="#fff" stroke-width="1.2" fill="none" stroke-linejoin="round"/><path d="M6 4.6 V8 M6 8.8 V10" stroke="#fff" stroke-width="1.1"/></svg>
  <span class="st" style="left:252px">0</span>
  <svg class="abs" style="left:275px;top:5px" width="12" height="13" viewBox="0 0 12 13"><path d="M6 4.6 L3.4 12.4 M6 4.6 L8.6 12.4 M4.4 9.6 H7.6" stroke="#fff" stroke-width="1.1" fill="none"/><circle cx="6" cy="4" r="1.1" fill="#fff"/><path d="M3.4 1.4 A3.6 3.6 0 0 0 3.4 6.6 M8.6 1.4 A3.6 3.6 0 0 1 8.6 6.6 M1.6 0.2 A5.6 5.6 0 0 0 1.6 7.8 M10.4 0.2 A5.6 5.6 0 0 1 10.4 7.8" stroke="#fff" stroke-width="1" fill="none"/></svg>
  <span class="st" style="left:291px">1</span>
  <svg class="abs" style="left:312px;top:4px" width="15" height="14" viewBox="0 0 15 14"><path d="M5.6 5 V1.2 L13.6 6.4 L8.2 10" stroke="#fff" stroke-width="1.2" fill="none" stroke-linejoin="round"/><ellipse cx="4" cy="10" rx="2" ry="2.6" stroke="#fff" stroke-width="1.1" fill="none"/><path d="M2.6 7.6 L1.8 6.6 M5.4 7.6 L6.2 6.6 M2 10 H0.4 M6 10 H7.6 M2.4 12 L1.2 13.2 M5.6 12 L6.8 13.2" stroke="#fff" stroke-width="0.9"/></svg>
  <span class="st" style="left:331px;letter-spacing:-0.02px">Python: Remote Attach (mmdetection)</span>
  <span class="st" style="left:859px">行 144，列 62</span>
  <span class="st" style="left:950px">空格: 4</span>
  <span class="st" style="left:1003px;letter-spacing:-0.4px">UTF-8</span>
  <span class="st" style="left:1050px">LF</span>
  <span class="st" style="left:1078px;letter-spacing:-0.15px">Shell Script</span>
  <span class="st" style="left:1152px;letter-spacing:-0.4px">布局: US</span>
  <svg class="abs" style="left:1213px;top:5px" width="14" height="13" viewBox="0 0 14 13"><path d="M3.4 0.8 H13 V6.6 H11.4 V8.8 L9 6.6 H7.6" stroke="#fff" stroke-width="1.1" fill="none" stroke-linejoin="round"/><circle cx="4.4" cy="5.6" r="2.1" stroke="#fff" stroke-width="1.1" fill="none"/><path d="M0.8 12.4 C0.8 9.6 2.4 8.6 4.4 8.6 C6.4 8.6 8 9.6 8 12.4" stroke="#fff" stroke-width="1.1" fill="none"/></svg>
  <svg class="abs" style="left:1244px;top:4px" width="13" height="14" viewBox="0 0 13 14"><path d="M6.5 1.2 C3.6 1.2 2.6 3.4 2.6 5.6 V8.6 L1.2 10.6 H11.8 L10.4 8.6 V5.6 C10.4 3.4 9.4 1.2 6.5 1.2 Z" stroke="#fff" stroke-width="1.1" fill="none" stroke-linejoin="round"/><path d="M5 10.8 A1.5 1.5 0 0 0 8 10.8" stroke="#fff" stroke-width="1.1" fill="none"/></svg>
</div>
<svg id="anno" class="abs" style="left:0;top:0;pointer-events:none" width="1272" height="777" viewBox="0 0 1272 777"><rect x="348" y="203" width="489" height="25" stroke="#ed1c24" stroke-width="2" fill="none"/><rect x="872" y="464.2" width="115" height="18.3" stroke="#ed1c24" stroke-width="2" fill="none"/><rect x="868.5" y="486.5" width="257" height="20" stroke="#ed1c24" stroke-width="1" fill="none"/><path d="M966.0 450.0 L847.6 248.1" stroke="#ed1c24" stroke-width="4.9" stroke-linecap="round" fill="none"/><path d="M839.3 233.5 L856.0 245.6 L841.2 254.0 Z" fill="#ed1c24"/><path d="M849.3 209.3 L1043.1 466.2" stroke="#ed1c24" stroke-width="4.9" stroke-linecap="round" fill="none"/><path d="M1052.9 479.2 L1035.1 469.5 L1048.6 459.8 Z" fill="#ed1c24"/><text transform="translate(730.6 188.3) scale(0.96 1)" x="0" y="0" font-family="Noto Sans CJK SC, Liberation Sans, sans-serif" font-weight="350" font-size="36" fill="#ed1c24">2</text><text x="879.9" y="460.8" font-family="NanumGothic, IPAGothic, Liberation Sans, sans-serif" font-size="34" fill="#ed1c24">1</text><text transform="translate(1094.8 536.3) scale(0.86 1)" x="0" y="0" font-family="Noto Sans CJK SC, Liberation Sans, sans-serif" font-weight="350" font-size="35.5" fill="#ed1c24">3</text></svg>
</body>
</html>
